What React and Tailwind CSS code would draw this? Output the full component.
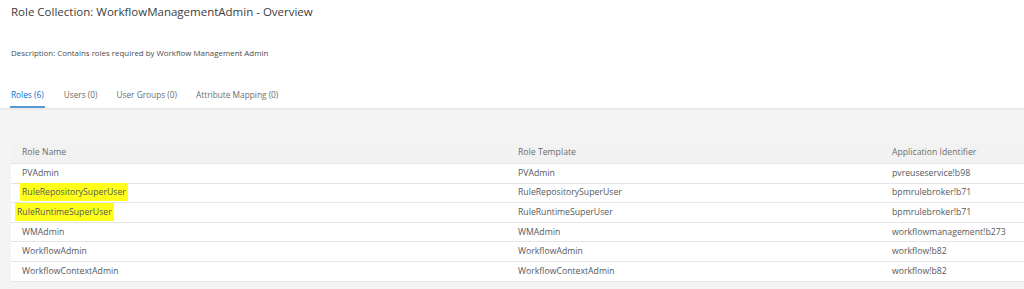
import React from 'react'

const rows = [
    { name: 'PVAdmin', template: 'PVAdmin', app: 'pvreuseservice!b98' },
    { name: 'RuleRepositorySuperUser', template: 'RuleRepositorySuperUser', app: 'bpmrulebroker!b71', mark: 'pl-[9px]' },
    { name: 'RuleRuntimeSuperUser', template: 'RuleRuntimeSuperUser', app: 'bpmrulebroker!b71', mark: 'pl-[4px]' },
    { name: 'WMAdmin', template: 'WMAdmin', app: 'workflowmanagement!b273' },
    { name: 'WorkflowAdmin', template: 'WorkflowAdmin', app: 'workflow!b82' },
    { name: 'WorkflowContextAdmin', template: 'WorkflowContextAdmin', app: 'workflow!b82' },
]

const tabs = ['Roles (6)', 'Users (0)', 'User Groups (0)', 'Attribute Mapping (0)']

export default function App() {
    return (
        <div className="w-[1024px] h-[289px] overflow-hidden bg-[#f4f4f4] text-[#4a4d50]" style={{ fontFamily: '"Open Sans", "Liberation Sans", sans-serif' }}>
            {/* Header */}
            <div className="bg-white pl-[11px] shadow-[0_1px_2px_rgba(0,0,0,0.08)]">
                <h1 className="pt-[2px] text-[11.5px] leading-[20px] text-[#3a3d40]">
                    Role Collection: WorkflowManagementAdmin - Overview
                </h1>
                <p className="mt-[25px] text-[7.9px] leading-[12px] text-[#4a4d50]">
                    Description: Contains roles required by Workflow Management Admin
                </p>
                <div className="mt-[29px] flex gap-[19px] text-[8.3px]">
                    {tabs.map((t, i) => (
                        <div
                            key={t}
                            className={`h-[20px] pt-[1px] ${i === 0 ? 'text-[#0a6ed1] border-b-2 border-[#5b9bd5] -ml-[1px] px-[1px]' : 'text-[#6a6d70] border-b-2 border-transparent'}`}
                        >
                            {t}
                        </div>
                    ))}
                </div>
            </div>

            {/* Table */}
            <div className="ml-[11px] mt-[35px] bg-white text-[8.7px]">
                <div className="flex h-[21px] items-center bg-[#f2f2f2] border-b border-[#e5e5e5] text-[#6a6d70]">
                    <div className="w-[507px] pl-[11px]">Role Name</div>
                    <div className="w-[374px]">Role Template</div>
                    <div className="flex-1">Application Identifier</div>
                </div>
                {rows.map(r => (
                    <div key={r.name} className="flex h-[19.6px] items-center border-b border-[#e5e5e5] text-[#55585b]">
                        <div className={`w-[507px] ${r.mark ? r.mark : 'pl-[11px]'}`}>
                            {r.mark ? (
                                <span className="bg-[#ffff1a] px-[2px] py-[3px]">{r.name}</span>
                            ) : r.name}
                        </div>
                        <div className="w-[374px]">{r.template}</div>
                        <div className="flex-1">{r.app}</div>
                    </div>
                ))}
            </div>
        </div>
    )
}
